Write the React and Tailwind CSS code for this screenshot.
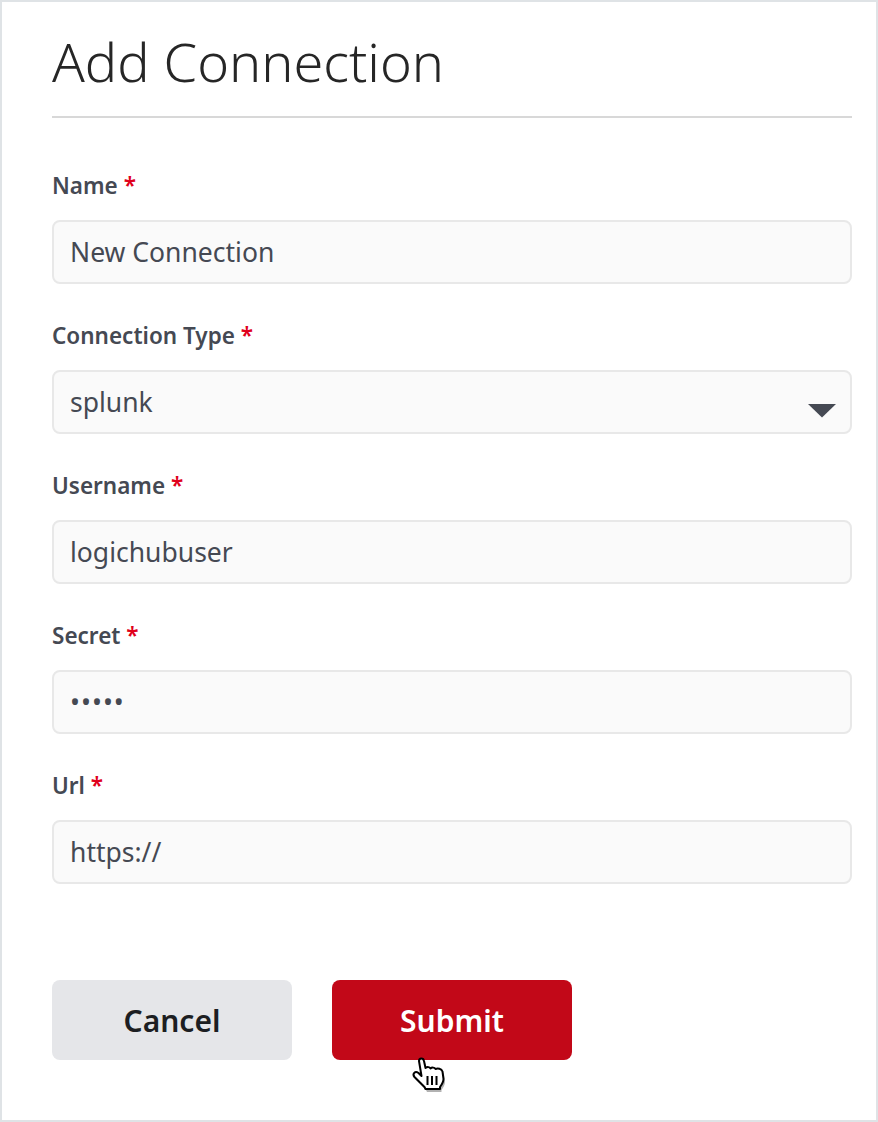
const inputCls = "block h-16 w-full rounded-lg border-2 border-[#e8e8e8] bg-[#fafafa] px-4 text-[26.5px] text-[#454953] outline-none";

function Label({ children }) {
  return (
    <label className="mb-5 block h-7 text-[22.5px] leading-7 font-semibold text-[#454953]">
      {children} <span className="font-semibold text-[#e0001b]">*</span>
    </label>
  );
}

function Field({ label, value, type = "text", className = "" }) {
  return (
    <div className="mb-[38px]">
      <Label>{label}</Label>
      <input type={type} value={value} readOnly className={inputCls + " " + className} />
    </div>
  );
}

const handPath =
  "M8.500 5C8.500 1.500 13 1.500 13.500 5L15 12C17 10.500 19 11 20 12.500C21.500 11 24 11.500 25 13C27 12 31 12.500 32 15.500L33 23C33 26 31 29 29.500 31L29.500 33L15 33L14 31L4 21C1.500 18 4.500 14.500 8 17L11 20Z";

function HandCursor() {
  return (
    <svg className="absolute top-[1052px] left-[408px]" width="38" height="42" viewBox="0 0 38 42">
      <g transform="translate(0.500 2)">
        <path d={handPath} fill="#000" opacity="0.3" transform="translate(1.500 3)" />
        <path d={handPath} fill="#fff" stroke="#000" strokeWidth="2" strokeLinejoin="round" />
        <path d="M17 20v9M21.500 20v9M26 20v9" stroke="#000" strokeWidth="2" />
      </g>
    </svg>
  );
}

export default function App() {
  return (
    <div className="relative h-[1122px] w-[878px] border-2 border-[#dfe3e6] bg-white font-['Noto_Sans','Open_Sans',sans-serif]">
      <div className="pr-6 pl-[50px]">
        <h1 className="h-[116px] border-b-2 border-[#d8d8d8] pt-6 text-[54px] leading-[70px] font-light text-[#262626]">
          Add Connection
        </h1>
        <form className="pt-[54px]">
          <Field label="Name" value="New Connection" />
          <div className="mb-[38px]">
            <Label>Connection Type</Label>
            <div className="relative">
              <select value="splunk" readOnly className={inputCls + " appearance-none pt-0.5"}>
                <option value="splunk">splunk</option>
              </select>
              <svg className="absolute top-[33px] right-[15px]" width="30" height="15" viewBox="0 0 30 15">
                <path d="M1 1h28L15 14.500z" fill="#454953" />
              </svg>
            </div>
          </div>
          <Field label="Username" value="logichubuser" />
          <Field label="Secret" value="abcde" type="password" className="tracking-[1px]" />
          <Field label="Url" value="https://" />
          <div className="flex gap-10 pt-[58px]">
            <button type="button" className="h-20 w-60 rounded-lg bg-[#e5e6e9] text-[30px] font-semibold text-[#1c1e22]">
              Cancel
            </button>
            <button type="button" className="h-20 w-60 rounded-lg bg-[#c20818] text-[30px] font-semibold text-white">
              Submit
            </button>
          </div>
        </form>
      </div>
      <HandCursor />
    </div>
  );
}
